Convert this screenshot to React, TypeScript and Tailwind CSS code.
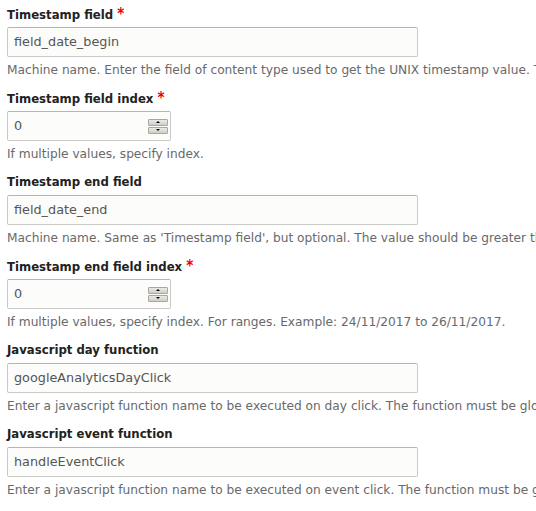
import React from "react";

type Field = {
  label: string;
  required?: boolean;
  value: string;
  number?: boolean;
  description: string;
};

const fields: Field[] = [
  {
    label: "Timestamp field",
    required: true,
    value: "field_date_begin",
    description:
      "Machine name. Enter the field of content type used to get the UNIX timestamp value. This field is required.",
  },
  {
    label: "Timestamp field index",
    required: true,
    value: "0",
    number: true,
    description: "If multiple values, specify index.",
  },
  {
    label: "Timestamp end field",
    value: "field_date_end",
    description:
      "Machine name. Same as 'Timestamp field', but optional. The value should be greater than the start value.",
  },
  {
    label: "Timestamp end field index",
    required: true,
    value: "0",
    number: true,
    description: "If multiple values, specify index. For ranges. Example: 24/11/2017 to 26/11/2017.",
  },
  {
    label: "Javascript day function",
    value: "googleAnalyticsDayClick",
    description:
      "Enter a javascript function name to be executed on day click. The function must be global.",
  },
  {
    label: "Javascript event function",
    value: "handleEventClick",
    description:
      "Enter a javascript function name to be executed on event click. The function must be global.",
  },
];

const Spinner: React.FC = () => (
  <div className="flex flex-col gap-[1px] w-[20px] mr-[2px]">
    {/* up */}
    <div className="h-[7px] bg-gradient-to-b from-[#eceae4] to-[#cfcdc6] border border-[#a9a7a0] rounded-[1px] flex items-center justify-center">
      <div className="w-0 h-0 border-l-[2px] border-r-[2px] border-b-[2px] border-l-transparent border-r-transparent border-b-black" />
    </div>
    {/* down */}
    <div className="h-[7px] bg-gradient-to-b from-[#eceae4] to-[#cfcdc6] border border-[#a9a7a0] rounded-[1px] flex items-center justify-center">
      <div className="w-0 h-0 border-l-[2px] border-r-[2px] border-t-[2px] border-l-transparent border-r-transparent border-t-black" />
    </div>
  </div>
);

export default function App() {
  return (
    <div
      className="w-[536px] h-[511px] overflow-hidden bg-white text-[#333]"
      style={{ fontFamily: '"DejaVu Sans", Verdana, sans-serif' }}
    >
      <div className="pl-[7px]">
        {fields.map((f) => (
          <div key={f.label} className="pt-[5px] h-[84px]">
            {/* Label */}
            <div
              className="h-[18px] leading-[18px] text-[13px] font-bold text-[#222] whitespace-nowrap"
              style={{ fontFamily: '"DejaVu Sans Condensed", "DejaVu Sans", sans-serif' }}
            >
              {f.label}
              {f.required && <span className="text-[#e00] ml-[4px] text-[15px]">*</span>}
            </div>

            {/* Input */}
            <div
              className={`mt-[4px] h-[30px] flex items-center justify-between bg-[#fcfcfa] border border-[#c9c9c5] border-t-[#b5b5b2] rounded-[2px] text-[12.8px] text-[#555] ${
                f.number ? "w-[164px]" : "w-[411px]"
              }`}
            >
              <span className="pl-[6px]">{f.value}</span>
              {f.number && <Spinner />}
            </div>

            {/* Description */}
            <div className="mt-[6px] leading-[15px] text-[12.2px] text-[#68696b] whitespace-nowrap">
              {f.description}
            </div>
          </div>
        ))}
      </div>
    </div>
  );
}
